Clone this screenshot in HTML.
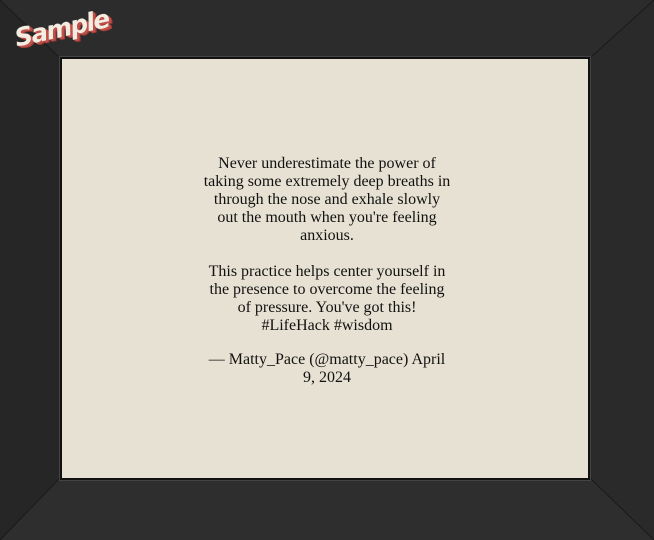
<!DOCTYPE html>
<html><head><meta charset="utf-8"><style>
html,body{margin:0;padding:0}
body{width:654px;height:540px;position:relative;overflow:hidden;background:#2b2b2b;font-family:"Liberation Serif",serif}
.frame{position:absolute;inset:0}
.mat{position:absolute;left:60px;top:57px;width:526px;height:419px;background:#e6e1d2;border:2px solid #111;box-shadow:0 0 0 1px #444}
.txt{position:absolute;left:0;width:654px;top:155px;text-align:center;font-size:16px;line-height:18px;color:#111}
.sample{position:absolute;left:12px;top:24px;font-family:"DejaVu Sans",sans-serif;font-weight:bold;font-style:italic;font-size:25px;color:#f3ece0;transform:rotate(-12deg);transform-origin:left top;letter-spacing:-1.5px;text-shadow:1px 1px 0 #c0504a,2px 2px 0 #c0504a,3px 3px 0 #a03a35}
</style></head><body>
<svg class="frame" width="654" height="540">
<polygon points="0,0 654,0 590,58 60,58" fill="#2c2c2c"/>
<polygon points="0,0 60,58 60,478 0,540" fill="#262626"/>
<polygon points="654,0 654,540 590,478 590,58" fill="#2a2a2a"/>
<polygon points="0,540 60,478 590,478 654,540" fill="#2e2e2e"/>
<g stroke="#1a1a1a" stroke-width="1"><line x1="0" y1="0" x2="60" y2="58"/><line x1="654" y1="0" x2="590" y2="58"/><line x1="0" y1="540" x2="60" y2="478"/><line x1="654" y1="540" x2="590" y2="478"/></g>
</svg>
<div class="mat"></div>
<div class="txt">Never underestimate the power of<br>taking some extremely deep breaths in<br>through the nose and exhale slowly<br>out the mouth when you're feeling<br>anxious.<br><br>This practice helps center yourself in<br>the presence to overcome the feeling<br>of pressure. You've got this!<br>#LifeHack #wisdom<br><div style="height:16px"></div>— Matty_Pace (@matty_pace) April<br>9, 2024</div>
<div class="sample">Sample</div>
</body></html>
